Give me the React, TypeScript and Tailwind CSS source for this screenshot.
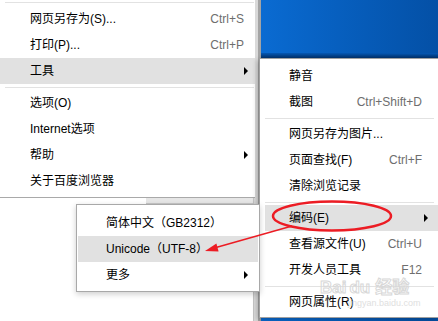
type Entry =
  | { kind: 'sep' }
  | { kind: 'item'; label: string; shortcut?: string; sub?: boolean; active?: boolean };

const sep: Entry = { kind: 'sep' };

const mainMenu: Entry[] = [
  { kind: 'item', label: '网页另存为(S)...', shortcut: 'Ctrl+S' },
  { kind: 'item', label: '打印(P)...', shortcut: 'Ctrl+P' },
  { kind: 'item', label: '工具', sub: true, active: true },
  sep,
  { kind: 'item', label: '选项(O)' },
  { kind: 'item', label: 'Internet选项' },
  { kind: 'item', label: '帮助', sub: true },
  { kind: 'item', label: '关于百度浏览器' },
];

const toolsMenu: Entry[] = [
  { kind: 'item', label: '静音' },
  { kind: 'item', label: '截图', shortcut: 'Ctrl+Shift+D' },
  sep,
  { kind: 'item', label: '网页另存为图片...' },
  { kind: 'item', label: '页面查找(F)', shortcut: 'Ctrl+F' },
  { kind: 'item', label: '清除浏览记录' },
  sep,
  { kind: 'item', label: '编码(E)', sub: true, active: true },
  { kind: 'item', label: '查看源文件(U)', shortcut: 'Ctrl+U' },
  { kind: 'item', label: '开发人员工具', shortcut: 'F12' },
  sep,
  { kind: 'item', label: '网页属性(R)' },
];

const encodingMenu: Entry[] = [
  { kind: 'item', label: '简体中文（GB2312）' },
  { kind: 'item', label: 'Unicode（UTF-8）', active: true },
  { kind: 'item', label: '更多', sub: true },
];

interface MenuStyle {
  row: string;
  active: string;
  sep: string;
  shortcut: string;
}

const Arrow = () => (
  <span className="ml-auto h-0 w-0 border-y-[4px] border-l-[4px] border-y-transparent border-l-black" />
);

const MenuList = ({ entries, styles }: { entries: Entry[]; styles: MenuStyle }) => (
  <>
    {entries.map((e, i) =>
      e.kind === 'sep' ? (
        <div key={i} className={styles.sep}>
          <div className="h-px bg-[#e2e2e2]" />
        </div>
      ) : (
        <div key={i} className={e.active ? styles.active : styles.row}>
          <span className="whitespace-nowrap">{e.label}</span>
          {e.shortcut && <span className={styles.shortcut}>{e.shortcut}</span>}
          {e.sub && <Arrow />}
        </div>
      )
    )}
  </>
);

const mainStyles: MenuStyle = {
  row: 'flex h-[26px] items-center pl-[30px] pr-[7px]',
  active: 'flex h-[26px] items-center bg-[#e1e1e1] pl-[30px] pr-[7px]',
  sep: 'pl-[5px] pr-px pt-[3px] pb-[2px]',
  shortcut: 'ml-auto mr-[4px] text-[#6e6e6e]',
};

const toolStyles: MenuStyle = {
  row: 'flex h-[26px] items-center pl-[29px] pr-[11px]',
  active: 'ml-[5px] flex h-[26px] items-center bg-[#e1e1e1] pl-[24px] pr-[11px]',
  sep: 'pl-[5px] pr-[5px] pt-[3px] pb-[2px]',
  shortcut: 'ml-auto mr-[6px] text-[#6e6e6e]',
};

const encodingStyles: MenuStyle = {
  row: 'flex h-[26px] items-center pl-[29px] pr-[11px]',
  active: 'mx-px flex h-[26px] items-center bg-[#e1e1e1] pl-[28px] pr-[10px]',
  sep: 'px-[5px] py-[3px]',
  shortcut: 'ml-auto mr-[6px] text-[#6e6e6e]',
};

export default function App() {
  return (
    <div className="relative h-[321px] w-[438px] overflow-hidden bg-white text-[12px] text-black [font-family:'Liberation_Sans','Noto_Sans_CJK_SC',sans-serif]">
      {/* desktop + browser frame behind the menus */}
      <div className="absolute inset-y-0 left-[261px] right-0 bg-gradient-to-r from-[#0a6bd2] to-[#0450a6]" />
      <div className="absolute left-[261px] right-0 top-[53px] h-[5px] bg-gradient-to-b from-[#0558b4] to-[#02316c]" />
      <div className="absolute inset-y-0 left-[253px] w-[8px] border-l border-r-[3px] border-l-[#c4c4c4] border-r-[#a4a4a4] bg-[#d9d9d9]" />
      <div className="absolute left-[146px] top-[198px] h-[6px] w-[107px] border-b border-[#c6c6c6] bg-[#e6e6e6]" />

      {/* main menu */}
      <div className="absolute left-0 top-0 w-[255px] border-b border-[#a9a9a9] bg-white pb-[3px]">
        <div className="pl-[5px] pr-px pt-[2px] pb-[3px]">
          <div className="h-px bg-[#e2e2e2]" />
        </div>
        <MenuList entries={mainMenu} styles={mainStyles} />
      </div>

      {/* tools submenu */}
      <div className="absolute left-[259px] top-[58px] w-[181px] border border-[#a0a0a0] bg-white pb-[2px] pt-[4px] shadow-[-2px_2px_5px_rgba(0,0,0,0.22)]">
        <MenuList entries={toolsMenu} styles={toolStyles} />
      </div>

      {/* encoding submenu */}
      <div className="absolute left-[76px] top-[204px] w-[184px] border border-[#a8a8a8] bg-white pb-[3px] pt-[5px] shadow-[0_2px_6px_rgba(0,0,0,0.2)]">
        <MenuList entries={encodingMenu} styles={encodingStyles} />
      </div>

      {/* baidu watermark */}
      <div className="pointer-events-none absolute left-[320px] top-[279px] flex items-baseline gap-[3px] text-[17px] font-bold leading-none text-transparent [-webkit-text-stroke:1px_#d8d8d8]">
        <span>Bai</span>
        <span>du</span>
        <span className="ml-[2px]">经验</span>
      </div>
      <div className="pointer-events-none absolute left-[348px] top-[299px] text-[9px] leading-none text-[#e0e0e0]">
        jingyan.baidu.com
      </div>

      {/* red annotation */}
      <svg className="pointer-events-none absolute inset-0" width="438" height="321" viewBox="0 0 438 321">
        <ellipse cx="332" cy="216" rx="59" ry="14.5" fill="none" stroke="#ec1c24" strokeWidth="2.5" />
        <line x1="292" y1="226" x2="216" y2="247.5" stroke="#ec1c24" strokeWidth="1.5" />
        <polygon points="205,251 218.6,251.4 216.4,243.6" fill="#ec1c24" />
      </svg>
    </div>
  );
}
